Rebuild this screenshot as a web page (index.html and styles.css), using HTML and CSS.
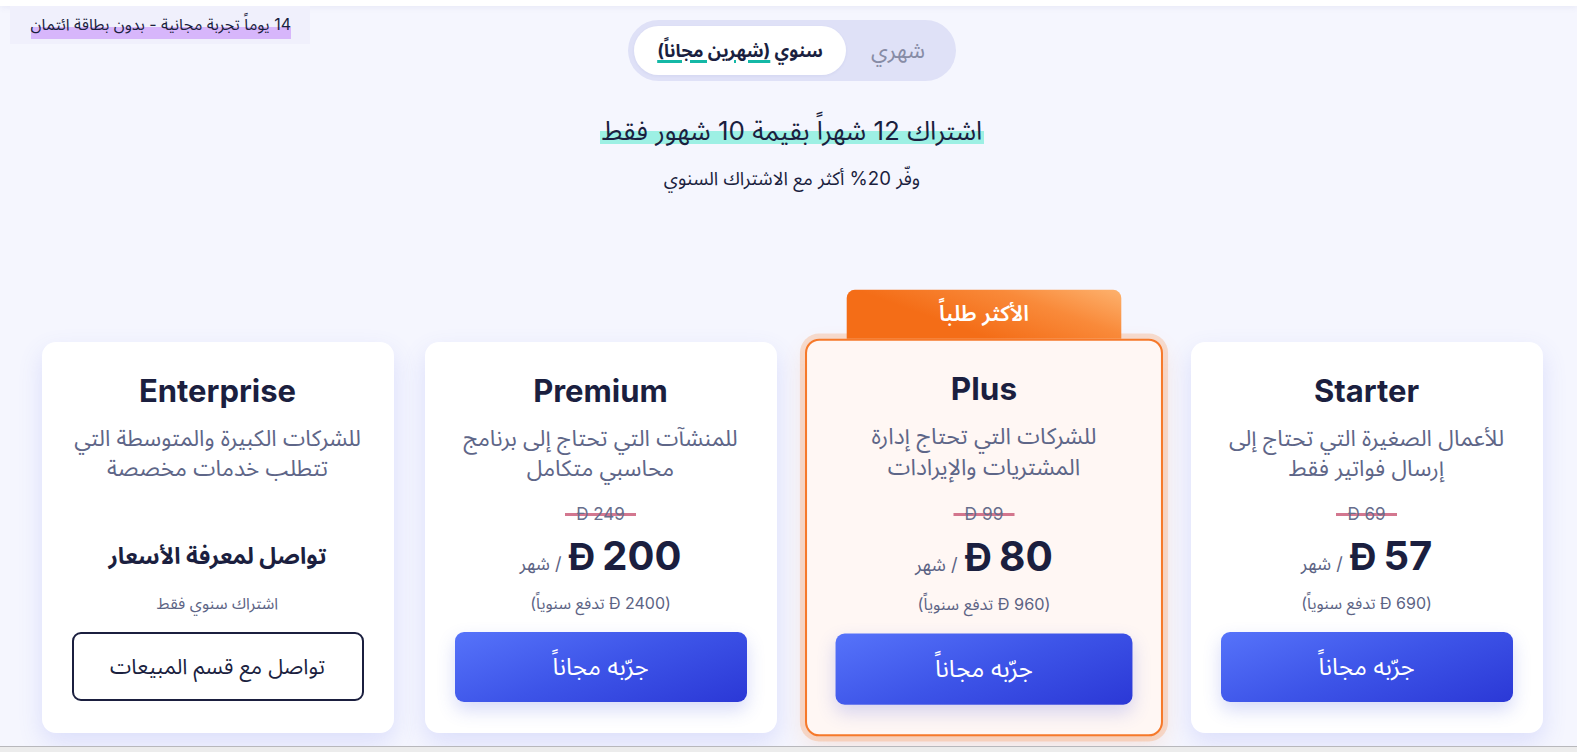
FILE: index.html
```html
<!DOCTYPE html>
<html lang="ar" dir="rtl">
<head>
<meta charset="utf-8">
<title>الأسعار</title>
<link rel="stylesheet" href="styles.css">
</head>
<body>
<div class="topbar"></div>
<div class="trial"><span class="trial-text">14 يوماً تجربة مجانية - بدون بطاقة ائتمان</span></div>
<main class="pricing">
  <div class="toggle">
    <button class="toggle-opt">شهري</button>
    <button class="toggle-opt active">سنوي <span class="free">(شهرين مجاناً)</span></button>
  </div>
  <h2 class="headline"><span class="hl">اشتراك 12 شهراً بقيمة 10 شهور فقط</span></h2>
  <p class="sub">وفّر 20% أكثر مع الاشتراك السنوي</p>

  <div class="cards">
    <section class="card">
      <h3 class="title">Starter</h3>
      <p class="desc">للأعمال الصغيرة التي تحتاج إلى إرسال فواتير فقط</p>
      <div class="old"><span class="strike">Đ 69</span></div>
      <div class="price"><span class="amount">57</span><span class="cur">Đ</span><span class="per">/ شهر</span></div>
      <div class="note">(690 Đ تدفع سنوياً)</div>
      <button class="btn">جرّبه مجاناً</button>
    </section>
    <section class="card featured">
      <div class="badge">الأكثر طلباً</div>
      <h3 class="title">Plus</h3>
      <p class="desc">للشركات التي تحتاج إدارة المشتريات والإيرادات</p>
      <div class="old"><span class="strike">Đ 99</span></div>
      <div class="price"><span class="amount">80</span><span class="cur">Đ</span><span class="per">/ شهر</span></div>
      <div class="note">(960 Đ تدفع سنوياً)</div>
      <button class="btn">جرّبه مجاناً</button>
    </section>
    <section class="card">
      <h3 class="title">Premium</h3>
      <p class="desc">للمنشآت التي تحتاج إلى برنامج محاسبي متكامل</p>
      <div class="old"><span class="strike">Đ 249</span></div>
      <div class="price"><span class="amount">200</span><span class="cur">Đ</span><span class="per">/ شهر</span></div>
      <div class="note">(2400 Đ تدفع سنوياً)</div>
      <button class="btn">جرّبه مجاناً</button>
    </section>
    <section class="card">
      <h3 class="title">Enterprise</h3>
      <p class="desc">للشركات الكبيرة والمتوسطة التي تتطلب خدمات مخصصة</p>
      <div class="old empty"></div>
      <div class="price contact">تواصل لمعرفة الأسعار</div>
      <div class="note">اشتراك سنوي فقط</div>
      <button class="btn outline">تواصل مع قسم المبيعات</button>
    </section>
  </div>
</main>
<div class="bottombar"></div>
</body>
</html>
```
FILE: styles.css
```css
* { box-sizing: border-box; }
html, body { margin: 0; padding: 0; }
body {
  background: #f5f6fe;
  font-family: Inter, "Noto Sans Arabic", "Noto Sans", "DejaVu Sans", sans-serif;
  color: #1b1f3f;
  height: 752px;
  overflow: hidden;
  position: relative;
}
.topbar {
  height: 6px;
  background: #fff;
  box-shadow: 0 1px 6px rgba(120, 125, 180, 0.12);
}
.trial {
  position: absolute;
  top: 6px;
  left: 10px;
  width: 300px;
  height: 38px;
  background: #f0f0fc;
  display: flex;
  align-items: center;
  justify-content: flex-start;
  padding-right: 19px;
  font-size: 16px;
}
.trial-text {
  color: #1b1f3f;
  background: linear-gradient(transparent 55%, #d7b6fb 55%, #d7b6fb 92%, transparent 92%);
}
.pricing {
  display: flex;
  flex-direction: column;
  align-items: center;
  padding-left: 7px;
}
.toggle {
  margin-top: 14px;
  display: flex;
  align-items: center;
  background: #dfe1f7;
  border-radius: 31px;
  padding: 6px;
  height: 61px;
}
.toggle-opt {
  font-family: inherit;
  border: 0;
  background: transparent;
  font-size: 22px;
  color: #878ca6;
  height: 49px;
  border-radius: 25px;
  padding: 0;
  cursor: pointer;
}
.toggle-opt:first-child { width: 104px; }
.toggle-opt.active {
  background: #fff;
  color: #1b1f3f;
  font-weight: 700;
  font-size: 18px;
  width: 212px;
  box-shadow: 0 1px 3px rgba(80, 90, 160, 0.08);
}
.free {
  text-decoration: underline;
  text-decoration-color: #14b8a6;
  text-decoration-thickness: 3px;
  text-underline-offset: 3px;
}
.headline {
  margin: 32px 0 0;
  font-size: 26px;
  font-weight: 400;
  line-height: 36px;
}
.hl {
  background: linear-gradient(transparent 52%, #9df0e4 52%, #9df0e4 95%, transparent 95%);
  padding: 0 2px;
}
.sub {
  margin: 16px 0 0;
  font-size: 18.6px;
  line-height: 26px;
}
.cards {
  margin-top: 151px;
  width: 1501px;
  display: grid;
  grid-template-columns: repeat(4, 352px);
  gap: 31px;
}
.card {
  position: relative;
  background: #fff;
  border-radius: 14px;
  padding: 30px 30px 29px;
  text-align: center;
  box-shadow: 0 10px 24px rgba(90, 100, 235, 0.16);
  display: flex;
  flex-direction: column;
  align-items: center;
  height: 391px;
}
.card.featured {
  background: #fff7f4;
  border: 2px solid #f6792a;
  padding: 28px 28px 27px;
  box-shadow: 0 0 0 5px rgba(249, 115, 22, 0.2), 0 10px 24px rgba(249, 115, 22, 0.14);
  transform: scale(1.017);
}
.badge {
  position: absolute;
  top: -50px;
  left: 50%;
  width: 270px;
  margin-left: -135px;
  height: 48px;
  border-radius: 8px 8px 0 0;
  background: linear-gradient(20deg, #f46d17 35%, #f98a3a 70%, #fdb26e 100%);
  color: #fff;
  font-weight: 600;
  font-size: 21.5px;
  display: flex;
  align-items: center;
  justify-content: center;
  z-index: -1;
}
.title {
  margin: 0;
  font-size: 31px;
  line-height: 38px;
  font-weight: 700;
  color: #1b1f3f;
}
.desc {
  margin: 13px 0 0;
  font-size: 22.5px;
  line-height: 30px;
  color: #5e6688;
  height: 60px;
}
.old {
  margin-top: 20px;
  height: 22px;
  font-size: 17px;
  line-height: 22px;
  color: #676d8c;
}
.strike {
  padding: 0 11px;
  background: linear-gradient(transparent 45%, rgba(200, 85, 115, 0.8) 45%, rgba(200, 85, 115, 0.8) 62%, transparent 62%);
}
.price {
  margin-top: 9px;
  height: 44px;
  display: flex;
  align-items: baseline;
  justify-content: center;
  gap: 7px;
}
.amount {
  font-size: 40px;
  font-weight: 700;
  line-height: 44px;
  color: #1b1f3f;
}
.cur {
  font-size: 37px;
  font-weight: 700;
  color: #1b1f3f;
}
.per {
  font-size: 18px;
  color: #5c6384;
}
.price.contact {
  font-size: 23px;
  font-weight: 700;
  line-height: 44px;
  color: #1b1f3f;
}
.note {
  margin-top: 15px;
  font-size: 16px;
  line-height: 20px;
  color: #5c6384;
}
.btn {
  margin-top: 19px;
  width: 100%;
  height: 70px;
  flex: none;
  border: 0;
  border-radius: 9px;
  font-family: inherit;
  font-size: 24px;
  color: #fff;
  background: linear-gradient(160deg, #5673fa 0%, #3d54e8 50%, #2b38d6 100%);
  box-shadow: 0 8px 18px rgba(70, 85, 225, 0.22);
  cursor: pointer;
}
.btn.outline {
  background: #fff;
  color: #1b1f3f;
  border: 2px solid #1b1f3f;
  box-shadow: none;
  height: 69px;
  font-size: 21.5px;
}
.bottombar {
  position: absolute;
  left: 0;
  right: 0;
  bottom: 0;
  height: 6px;
  background: #ececec;
  border-top: 1px solid #b8b8bc;
}
```
